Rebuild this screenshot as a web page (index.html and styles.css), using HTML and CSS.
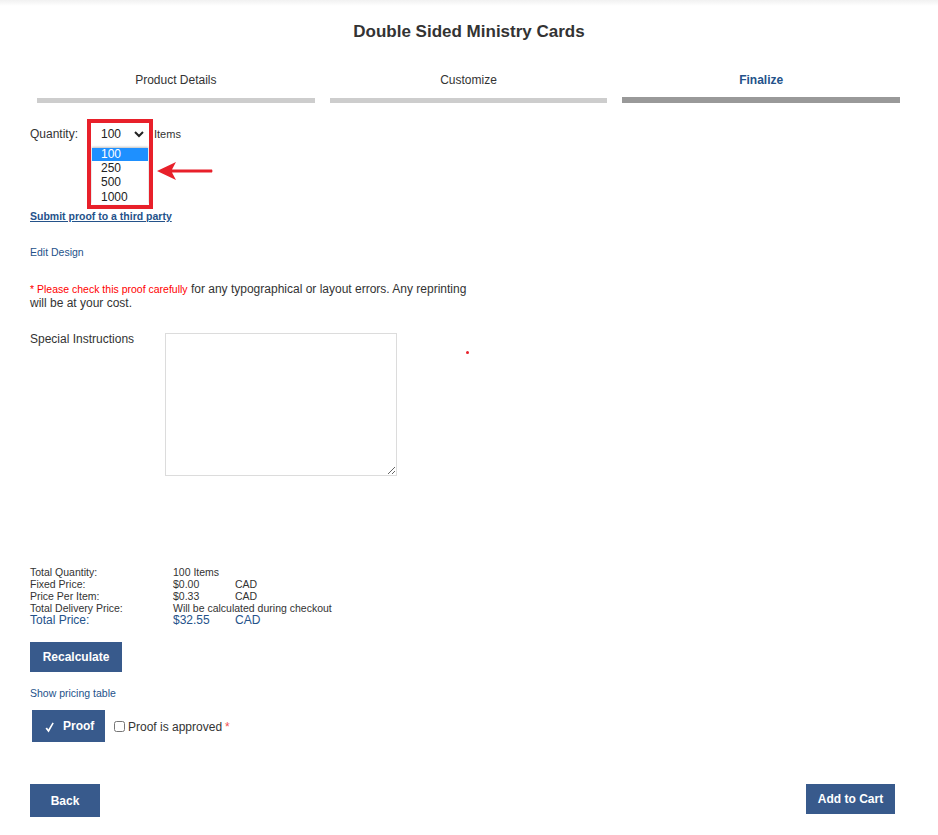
FILE: index.html
```html
<!DOCTYPE html>
<html lang="en">
<head>
    <meta charset="UTF-8">
    <meta name="viewport" content="width=device-width, initial-scale=1.0">
    <title>Double Sided Ministry Cards</title>
    <link rel="stylesheet" href="styles.css">
</head>
<body>
    <div class="topshade"></div>
    <h1 class="title">Double Sided Ministry Cards</h1>

    <div class="steps">
        <div class="step">
            <div class="step-label">Product Details</div>
            <div class="step-bar"></div>
        </div>
        <div class="step">
            <div class="step-label">Customize</div>
            <div class="step-bar"></div>
        </div>
        <div class="step active">
            <div class="step-label">Finalize</div>
            <div class="step-bar"></div>
        </div>
    </div>

    <div class="content">
        <div class="qty-row">
            <span class="qty-label">Quantity:</span>
            <div class="select-wrap">
                <select class="qty-select">
                    <option>100</option>
                    <option>250</option>
                    <option>500</option>
                    <option>1000</option>
                </select>
                <svg class="chevron" width="10" height="7" viewBox="0 0 10 7">
                    <path d="M1 1 L5 5 L9 1" fill="none" stroke="#222" stroke-width="2"/>
                </svg>
                <!-- open dropdown list -->
                <ul class="qty-list">
                    <li class="selected">100</li>
                    <li>250</li>
                    <li>500</li>
                    <li>1000</li>
                </ul>
                <div class="highlight-box"></div>
                <svg class="arrow" width="56" height="20" viewBox="0 0 56 20">
                    <path d="M0 10 L19 1 L15 8.4 L55 8.4 Q56 10 55 11.6 L15 11.6 L19 19 Z" fill="#e8202a"/>
                </svg>
            </div>
            <span class="qty-unit">Items</span>
        </div>

        <a class="third-party" href="#">Submit proof to a third party</a>

        <a class="edit-design" href="#">Edit Design</a>

        <p class="warning">
            <span class="warn-red">* Please check this proof carefully</span> for any typographical or layout errors. Any reprinting will be at your cost.
        </p>

        <div class="instructions">
            <label class="inst-label" for="inst">Special Instructions</label>
            <textarea id="inst" class="inst-box"></textarea>
            <span class="red-dot"></span>
        </div>

        <div class="totals">
            <span>Total Quantity:</span><span>100 Items</span><span></span>
            <span>Fixed Price:</span><span>$0.00</span><span>CAD</span>
            <span>Price Per Item:</span><span>$0.33</span><span>CAD</span>
            <span>Total Delivery Price:</span><span class="span2">Will be calculated during checkout</span>
            <span class="tp">Total Price:</span><span class="tp">$32.55</span><span class="tp">CAD</span>
        </div>

        <button class="btn recalc">Recalculate</button>

        <a class="pricing-link" href="#">Show pricing table</a>

        <div class="proof-row">
            <button class="btn proof">
                <svg class="check" width="9" height="11" viewBox="0 0 9 11">
                    <path d="M0.5 6.5 L2 5.5 L3.3 7.6 L7.5 0.5 L8.8 1.3 L3.6 10.5 Z" fill="#fff"/>
                </svg>
                Proof
            </button>
            <label class="approve">
                <input type="checkbox"> Proof is approved <span class="req">*</span>
            </label>
        </div>

        <div class="nav-row">
            <button class="btn back">Back</button>
            <button class="btn cart">Add to Cart</button>
        </div>
    </div>
</body>
</html>
```

FILE: styles.css
```css
body {
    font-family: "Liberation Sans", Arial, sans-serif;
    margin: 0;
    padding: 0;
    background-color: white;
    color: #333;
    font-size: 12px;
}
.topshade {
    height: 6px;
    margin-bottom: -6px;
    background: linear-gradient(#f1f1f1, #fff);
}
.title {
    margin: 0;
    padding-top: 22px;
    font-size: 17px;
    line-height: 20px;
    text-align: center;
    color: #333;
}
.steps {
    display: flex;
    gap: 15px;
    padding: 0 38px 0 37px;
    margin-top: 30px;
}
.step {
    flex: 1;
}
.step-label {
    text-align: center;
    font-size: 12px;
    line-height: 16px;
    padding-bottom: 9px;
    color: #333;
}
.step-bar {
    height: 5px;
    margin-top: 1px;
    background-color: #cdcdcd;
}
.step.active .step-label {
    color: #24528a;
    font-weight: bold;
}
.step.active .step-bar {
    height: 6px;
    margin-top: 0;
    background-color: #999;
}
.content {
    padding: 0 43px 0 30px;
}
.qty-row {
    display: flex;
    align-items: center;
    margin-top: 21px;
    height: 20px;
}
.qty-label {
    width: 61px;
}
.select-wrap {
    position: relative;
    width: 58px;
    height: 20px;
}
.qty-select {
    appearance: none;
    -webkit-appearance: none;
    width: 100%;
    height: 20px;
    border: none;
    background: white;
    font-family: inherit;
    font-size: 12px;
    color: #222;
    padding: 0 0 0 10px;
}
.chevron {
    position: absolute;
    right: 5px;
    top: 7px;
}
.qty-list {
    position: absolute;
    left: 1px;
    top: 24px;
    width: 56px;
    margin: 0;
    padding: 0;
    list-style: none;
    background: white;
    box-shadow: 0 -1px 2px rgba(0,0,0,0.25);
}
.qty-list li {
    height: 14.3px;
    line-height: 14px;
    padding-left: 9px;
    font-size: 12px;
    color: #222;
}
.qty-list li.selected {
    background-color: #1e90ff;
    color: white;
    height: 13px;
    line-height: 13px;
}
.highlight-box {
    position: absolute;
    left: -4px;
    top: -5px;
    width: 58px;
    height: 82px;
    border: 4px solid #e8202a;
}
.arrow {
    position: absolute;
    left: 66px;
    top: 37px;
}
.qty-unit {
    margin-left: 5px;
    font-size: 11px;
}
.third-party {
    display: block;
    margin-top: 66px;
    font-size: 10.5px;
    line-height: 13px;
    font-weight: bold;
    color: #24528a;
    text-decoration: underline;
    width: max-content;
}
.edit-design {
    display: block;
    margin-top: 23px;
    font-size: 10.5px;
    line-height: 13px;
    color: #24528a;
    text-decoration: none;
    width: max-content;
}
.warning {
    margin: 24px 0 0 0;
    width: 450px;
    font-size: 12px;
    line-height: 13.5px;
    color: #333;
}
.warn-red {
    color: #f00;
    font-size: 10.5px;
}
.instructions {
    display: flex;
    align-items: flex-start;
    margin-top: 22px;
    position: relative;
}
.inst-label {
    width: 135px;
    line-height: 14px;
}
.inst-box {
    width: 232px;
    height: 143px;
    box-sizing: border-box;
    border: 1px solid #dcdcdc;
    resize: vertical;
    margin: 1px 0 0 0;
    padding: 2px;
}
.red-dot {
    position: absolute;
    left: 436px;
    top: 19px;
    width: 3px;
    height: 3px;
    border-radius: 50%;
    background: #e8202a;
}
.totals {
    display: grid;
    grid-template-columns: 143px 62px auto;
    margin-top: 90px;
    font-size: 10.5px;
    line-height: 12px;
    width: max-content;
}
.totals .span2 {
    grid-column: span 2;
}
.totals .tp {
    font-size: 12px;
    color: #24528a;
}
.btn {
    background-color: #385a8c;
    color: white;
    border: none;
    font-family: inherit;
    font-weight: bold;
    font-size: 12px;
    cursor: pointer;
}
.recalc {
    display: block;
    margin-top: 16px;
    width: 92px;
    height: 30px;
}
.pricing-link {
    display: block;
    margin-top: 15px;
    font-size: 10.5px;
    line-height: 13px;
    color: #24528a;
    text-decoration: none;
    width: max-content;
}
.proof-row {
    display: flex;
    align-items: center;
    margin-top: 10px;
}
.proof {
    width: 73px;
    height: 32px;
    margin-left: 2px;
    display: flex;
    align-items: center;
    padding: 0 0 0 13px;
    gap: 9px;
}
.check {
    margin-top: 3px;
}
.approve {
    display: flex;
    align-items: center;
    margin-left: 8px;
    font-size: 12px;
    margin-top: 1px;
}
.approve input {
    margin: 0 3px 0 1px;
    width: 11px;
    height: 11px;
}
.req {
    color: #f25050;
    margin-left: 3px;
}
.nav-row {
    display: flex;
    justify-content: space-between;
    align-items: flex-start;
    margin-top: 42px;
}
.back {
    width: 70px;
    height: 33px;
}
.cart {
    width: 89px;
    height: 30px;
}
```
